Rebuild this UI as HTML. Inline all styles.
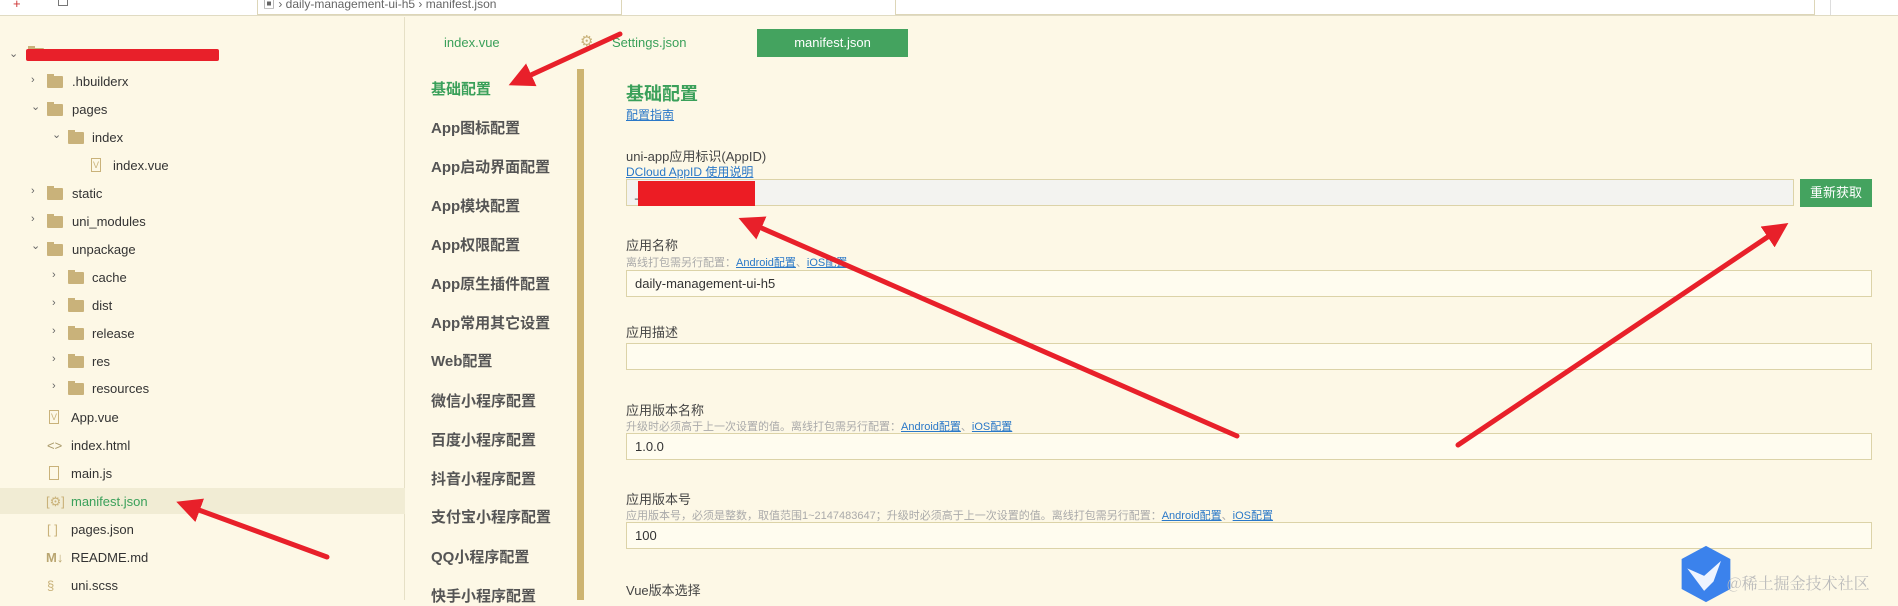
<!DOCTYPE html>
<html><head><meta charset="utf-8">
<style>
*{margin:0;padding:0;box-sizing:border-box}
body{width:1898px;height:600px;overflow:hidden;background:#fdf8e6;font-family:"Liberation Sans","Noto Sans CJK SC",sans-serif;position:relative;color:#333}
.abs{position:absolute;white-space:nowrap}
.top{position:absolute;left:0;top:0;width:1898px;height:16px;background:#fff;border-bottom:1px solid #e0dbc3}
.side{position:absolute;left:0;top:17px;width:405px;height:583px;border-right:1px solid #e6e0c6}
.row{position:absolute;font-size:13px;color:#333;line-height:16px}
.chev{position:absolute;font-size:11px;color:#666}
.fold{position:absolute;width:16px;height:12px;background:#c9b27a;border-radius:1px}
.fold:before{content:"";position:absolute;left:0;top:-2px;width:7px;height:3px;background:#c9b27a}
.nav{position:absolute;left:431px;font-size:15px;font-weight:bold;color:#555}
.lbl{position:absolute;left:626px;font-size:13px;color:#444}
.hint{position:absolute;left:626px;font-size:11px;color:#aaa}
.hint a,.lk{color:#2a78c8;text-decoration:underline}
.inp{position:absolute;left:626px;width:1246px;height:27px;border:1px solid #dcd3a8;background:#fffcef;font-size:13px;padding-left:8px;line-height:25px;color:#333}
</style></head><body>
<div class="top"></div>
<div class="abs" style="left:13px;top:-4px;font-size:13px;color:#c33">+</div>
<div class="abs" style="left:58px;top:0;width:10px;height:6px;border:1px solid #777;border-top:none"></div>
<div class="abs" style="left:257px;top:0;width:365px;height:15px;border:1px solid #ddd6b8;border-top:none;background:#fff"></div>
<div class="abs" style="left:263px;top:-5px;font-size:12px;color:#666">▣ › daily-management-ui-h5 › manifest.json</div>
<div class="abs" style="left:895px;top:0;width:920px;height:15px;border:1px solid #ddd6b8;border-top:none;background:#fff"></div>
<div class="abs" style="left:1830px;top:0;width:68px;height:15px;border-left:1px solid #ddd;background:#fff"></div>
<div class="side"></div>
<div class="abs" style="left:0;top:488px;width:405px;height:26px;background:#f1ecd4"></div>

<!-- tree -->
<div class="chev" style="left:9px;top:47px">⌄</div>
<div class="fold" style="left:28px;top:48px"></div>
<div class="abs" style="left:26px;top:49px;width:193px;height:12px;background:#e8202a;border-radius:2px"></div>

<div class="chev" style="left:31px;top:74px">›</div><div class="fold" style="left:47px;top:76px"></div><div class="row" style="left:72px;top:74px">.hbuilderx</div>
<div class="chev" style="left:31px;top:100px">⌄</div><div class="fold" style="left:47px;top:104px"></div><div class="row" style="left:72px;top:102px">pages</div>
<div class="chev" style="left:52px;top:128px">⌄</div><div class="fold" style="left:68px;top:132px"></div><div class="row" style="left:92px;top:130px">index</div>
<div class="abs" style="left:91px;top:158px;width:10px;height:14px;border:1px solid #c9b27a;font-size:9px;color:#c9b27a;text-align:center;line-height:12px">V</div><div class="row" style="left:113px;top:158px">index.vue</div>
<div class="chev" style="left:31px;top:185px">›</div><div class="fold" style="left:47px;top:188px"></div><div class="row" style="left:72px;top:186px">static</div>
<div class="chev" style="left:31px;top:213px">›</div><div class="fold" style="left:47px;top:216px"></div><div class="row" style="left:72px;top:214px">uni_modules</div>
<div class="chev" style="left:31px;top:239px">⌄</div><div class="fold" style="left:47px;top:244px"></div><div class="row" style="left:72px;top:242px">unpackage</div>
<div class="chev" style="left:52px;top:269px">›</div><div class="fold" style="left:68px;top:272px"></div><div class="row" style="left:92px;top:270px">cache</div>
<div class="chev" style="left:52px;top:297px">›</div><div class="fold" style="left:68px;top:300px"></div><div class="row" style="left:92px;top:298px">dist</div>
<div class="chev" style="left:52px;top:325px">›</div><div class="fold" style="left:68px;top:328px"></div><div class="row" style="left:92px;top:326px">release</div>
<div class="chev" style="left:52px;top:353px">›</div><div class="fold" style="left:68px;top:356px"></div><div class="row" style="left:92px;top:354px">res</div>
<div class="chev" style="left:52px;top:380px">›</div><div class="fold" style="left:68px;top:383px"></div><div class="row" style="left:92px;top:381px">resources</div>
<div class="abs" style="left:49px;top:410px;width:10px;height:14px;border:1px solid #c9b27a;font-size:9px;color:#c9b27a;text-align:center;line-height:12px">V</div><div class="row" style="left:71px;top:410px">App.vue</div>
<div class="row" style="left:47px;top:438px;color:#aa9a6a">&lt;&gt;</div><div class="row" style="left:71px;top:438px">index.html</div>
<div class="abs" style="left:49px;top:466px;width:10px;height:14px;border:1px solid #c9b27a"></div><div class="row" style="left:71px;top:466px">main.js</div>
<div class="row" style="left:46px;top:494px;color:#c9b27a">[⚙]</div><div class="row" style="left:71px;top:494px;color:#3aa05a">manifest.json</div>
<div class="row" style="left:47px;top:522px;color:#c9b27a">[ ]</div><div class="row" style="left:71px;top:522px">pages.json</div>
<div class="row" style="left:46px;top:550px;color:#b9a570;font-weight:bold">M↓</div><div class="row" style="left:71px;top:550px">README.md</div>
<div class="row" style="left:47px;top:578px;color:#c9b27a">§</div><div class="row" style="left:71px;top:578px">uni.scss</div>

<!-- tabs -->
<div class="abs" style="left:444px;top:35px;font-size:13px;color:#3aa05a">index.vue</div>
<div class="abs" style="left:580px;top:32px;font-size:15px;color:#c9b27a">⚙</div>
<div class="abs" style="left:612px;top:35px;font-size:13px;color:#3aa05a">Settings.json</div>
<div class="abs" style="left:757px;top:29px;width:151px;height:28px;background:#44a35f;color:#fff;font-size:13px;text-align:center;line-height:28px">manifest.json</div>

<!-- nav -->
<div class="nav" style="top:78px;color:#3aa05a">基础配置</div>
<div class="nav" style="top:117px">App图标配置</div>
<div class="nav" style="top:156px">App启动界面配置</div>
<div class="nav" style="top:195px">App模块配置</div>
<div class="nav" style="top:234px">App权限配置</div>
<div class="nav" style="top:273px">App原生插件配置</div>
<div class="nav" style="top:312px">App常用其它设置</div>
<div class="nav" style="top:350px">Web配置</div>
<div class="nav" style="top:390px">微信小程序配置</div>
<div class="nav" style="top:429px">百度小程序配置</div>
<div class="nav" style="top:468px">抖音小程序配置</div>
<div class="nav" style="top:506px">支付宝小程序配置</div>
<div class="nav" style="top:546px">QQ小程序配置</div>
<div class="nav" style="top:585px">快手小程序配置</div>
<div class="abs" style="left:577px;top:69px;width:7px;height:531px;background:#cdb471"></div>

<!-- content -->
<div class="abs" style="left:626px;top:80px;font-size:18px;font-weight:bold;color:#3aa05a">基础配置</div>
<div class="abs lk" style="left:626px;top:106px;font-size:12px">配置指南</div>
<div class="lbl" style="top:146px">uni-app应用标识(AppID)</div>
<div class="abs lk" style="left:626px;top:163px;font-size:12px">DCloud AppID 使用说明</div>
<div class="inp" style="top:179px;width:1168px;background:#f3f3f0">_</div>
<div class="abs" style="left:638px;top:181px;width:117px;height:25px;background:#ec1c24"></div>
<div class="abs" style="left:1800px;top:179px;width:72px;height:28px;background:#44a35f;color:#fff;font-size:13px;text-align:center;line-height:28px">重新获取</div>

<div class="lbl" style="top:235px">应用名称</div>
<div class="hint" style="top:254px">离线打包需另行配置：<a>Android配置</a>、<a>iOS配置</a></div>
<div class="inp" style="top:270px">daily-management-ui-h5</div>
<div class="lbl" style="top:322px">应用描述</div>
<div class="inp" style="top:343px"></div>
<div class="lbl" style="top:400px">应用版本名称</div>
<div class="hint" style="top:418px">升级时必须高于上一次设置的值。离线打包需另行配置：<a>Android配置</a>、<a>iOS配置</a></div>
<div class="inp" style="top:433px">1.0.0</div>
<div class="lbl" style="top:489px">应用版本号</div>
<div class="hint" style="top:507px">应用版本号，必须是整数，取值范围1~2147483647；升级时必须高于上一次设置的值。离线打包需另行配置：<a>Android配置</a>、<a>iOS配置</a></div>
<div class="inp" style="top:522px">100</div>
<div class="lbl" style="top:580px">Vue版本选择</div>

<!-- watermark -->
<svg class="abs" style="left:1676px;top:544px" width="60" height="60" viewBox="0 0 64 64">
<polygon points="32,2 58,16 58,48 32,62 6,48 6,16" fill="#3b82ec"/>
<path d="M12 26 L30 34 L48 18 L40 40 L30 50 Z" fill="#eef4ff"/>
</svg>
<div class="abs" style="left:1727px;top:571px;font-size:16px;color:#bbb;font-family:'Noto Serif CJK SC',serif">@稀土掘金技术社区</div>

<!-- arrows -->
<svg class="abs" style="left:0;top:0" width="1898" height="600">
<defs><marker id="a" markerWidth="5" markerHeight="5" refX="2.5" refY="2.5" orient="auto"><path d="M0,0 L5,2.5 L0,5 Z" fill="#e8202a"/></marker></defs>
<g stroke="#e8202a" stroke-width="5" stroke-linecap="round" fill="none" marker-end="url(#a)">
<line x1="620" y1="34" x2="520" y2="80"/>
<line x1="327" y1="557" x2="188" y2="506"/>
<line x1="1237" y1="436" x2="750" y2="223"/>
<line x1="1458" y1="445" x2="1778" y2="230"/>
</g></svg>
</body></html>
